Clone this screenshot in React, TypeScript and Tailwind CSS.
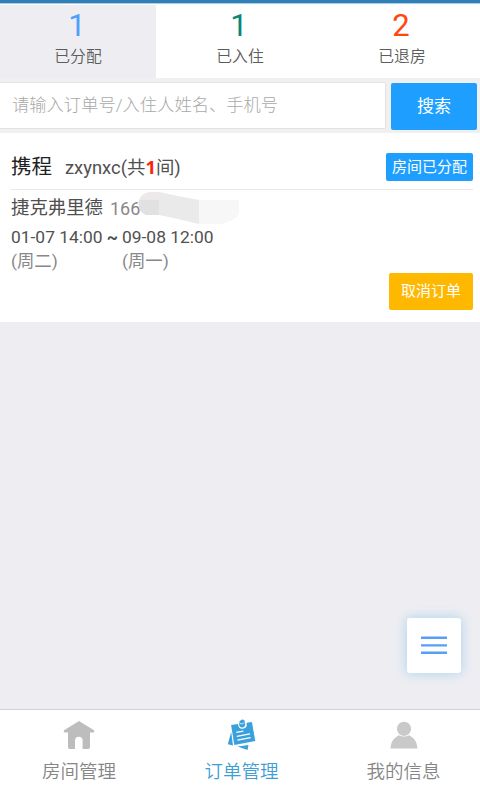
import React from 'react';

interface StatusTab {
  label: string;
  count: number;
  color: string;
  cell: string;
}

const STATUS_TABS: StatusTab[] = [
  { label: '已分配', count: 1, color: 'text-[#4da0fb]', cell: 'w-[156px] bg-[#eeeef2]' },
  { label: '已入住', count: 1, color: 'text-[#078776]', cell: 'w-[168px]' },
  { label: '已退房', count: 2, color: 'text-[#ff460f]', cell: 'w-[156px]' },
];

const HomeIcon = () => (
  <svg width="32" height="30" viewBox="0 0 32 30" fill="#bdbdbd">
    <path d="M16 1 31 10.3Q32 12.4 30.4 12.4H27V27.3Q27 29 25.3 29H19.6V20.8Q19.6 16.8 15.8 16.8T12 20.8V29H6.7Q5 29 5 27.3V12.4H1.6Q0 12.4 1 10.3Z" />
  </svg>
);

const OrderIcon = () => (
  <svg width="32" height="32" viewBox="0 0 32 32">
    <path d="M5.2 13 7 26.5 1.8 25.3Z" fill="#3aa1dc" />
    <path d="M11.5 27.6 22.5 26 21.6 31Z" fill="#3aa1dc" />
    <path d="M5.1 6.1 25.9 3.1 29.3 21.9 8.3 26Z" fill="#3aa1dc" />
    <path d="M10.3 13.3 17.3 12.1M10.8 17.3 24 14.8M11.4 21.2 24.6 18.7" stroke="#fff" strokeWidth="1.2" />
    <path d="M11.9 4.6Q12.3 10.3 17 9.8T20.6 3.6L16 1Z" fill="#fff" />
    <path d="M13.6 2.4Q16.2-.8 18.6 1.7L19.2 4.3Q19.6 8 16.6 8.4 13.3 8.6 13.1 5.2Z" fill="#3aa1dc" />
    <path d="M13.8 4.4Q16.5 5.6 18.7 3.7" stroke="#fff" strokeWidth=".7" fill="none" />
  </svg>
);

const UserIcon = () => (
  <svg width="28" height="28" viewBox="0 0 28 28" fill="#c9c9c9">
    <circle cx="14" cy="7.8" r="7.1" />
    <path d="M.6 27.5C.8 19.8 4.7 16.3 9.2 14.2Q14 17 18.8 14.2C23.3 16.3 27.2 19.8 27.4 27.5Z" />
  </svg>
);

const NAV_ITEMS = [
  { label: '房间管理', icon: <HomeIcon />, color: 'text-[#858585]', cell: 'w-[158px]' },
  { label: '订单管理', icon: <OrderIcon />, color: 'text-[#3f9ed3]', cell: 'w-[167px]' },
  { label: '我的信息', icon: <UserIcon />, color: 'text-[#858585]', cell: 'w-[157px]' },
];

export default function App() {
  return (
    <div className="relative flex h-[800px] w-[480px] flex-col overflow-hidden bg-[#eeeef2] font-['Roboto','Noto_Sans_CJK_SC',sans-serif] text-[#505050]">
      <div className="h-[4px] shrink-0 border-b border-[#a9cde5] bg-[#317fb7]" />

      {/* Order status tabs */}
      <div className="flex h-[74px] shrink-0 bg-white pt-px">
        {STATUS_TABS.map((tab) => (
          <div key={tab.label} className={`flex flex-col items-center ${tab.cell}`}>
            <span className={`mt-[4px] mr-[2px] text-[31px] leading-[34px] ${tab.color}`}>{tab.count}</span>
            <span className="mt-[2px] text-[15.8px] leading-[24px] font-[350] text-[#5c5c5c]">{tab.label}</span>
          </div>
        ))}
      </div>

      {/* Search */}
      <div className="flex h-[55px] shrink-0 items-start bg-[#f0f0f1] pt-[4px]">
        <input
          className="h-[47px] w-[386px] rounded-r-[2px] border border-l-0 border-[#e2e2e2] bg-white pb-[2px] pl-[12px] text-[17.3px] font-light outline-none placeholder:text-[#a9a9a9]"
          placeholder="请输入订单号/入住人姓名、手机号"
        />
        <button className="mt-px ml-[5px] h-[47px] w-[86px] rounded-[2px] bg-[#1e9fff] text-[17px] text-white">搜索</button>
      </div>

      {/* Order card */}
      <div className="h-[189px] shrink-0 bg-white pr-[7px] pl-[11px]">
        <div className="flex h-[57px] items-center border-b border-[#e8e8e8] pt-[12px]">
          <span className="text-[20.5px] text-[#222]">携程</span>
          <span className="ml-[13px] text-[18.4px]">
            zxynxc(共<b className="font-['Open_Sans'] text-[#ff1f0a]">1</b>间)
          </span>
          <span className="ml-auto h-[28px] w-[87px] rounded-[2px] bg-[#1e9fff] pt-px text-center text-[15px] leading-[27px] text-white">
            房间已分配
          </span>
        </div>
        <div className="flex h-[36px] items-center">
          <span className="text-[18.4px]">捷克弗里德</span>
          <span className="ml-[7px] text-[18px] text-[#888]">166</span>
          {/* masked part of the phone number */}
          <svg className="-ml-[2px]" width="102" height="34" viewBox="0 0 102 34">
            <path d="M1 9Q4 1 13 1H21V9Z" fill="#ece9e9" />
            <path d="M1 9H21V24H8Q-1 21 1 9Z" fill="#e1e1e1" />
            <path d="M21 1 35 4 61 9V33L40 28 21 24Z" fill="#eaeaea" />
            <path d="M61 9H101V22Q98 28 92 30L84 33H61Z" fill="#f7f7f7" />
          </svg>
        </div>
        <div className="flex text-[17.4px] leading-[24px]">
          <div className="w-[111px]">
            <p className="-mt-px whitespace-nowrap">01-07 14:00 <span className="font-bold">~</span></p>
            <p className="text-[#888]">(周二)</p>
          </div>
          <div>
            <p className="-mt-px">09-08 12:00</p>
            <p className="text-[#888]">(周一)</p>
          </div>
        </div>
        <div className="flex justify-end">
          <button className="h-[37px] w-[84px] rounded-[2px] bg-[#ffb800] text-[15px] text-white">取消订单</button>
        </div>
      </div>

      <button className="absolute top-[618px] left-[407px] flex h-[55px] w-[54px] items-center justify-center rounded-[3px] bg-white shadow-[0_0_12px_1px_#b3d5ed]">
        <svg width="26" height="19" viewBox="0 0 26 19" fill="#559ff5">
          <path d="M0 .6H26V3.1H0ZM0 8.2H26V10.6H0ZM0 15.6H26V18.1H0Z" />
        </svg>
      </button>

      {/* Bottom navigation */}
      <nav className="mt-auto flex h-[91px] shrink-0 border-t border-[#d3d3d5] bg-white">
        {NAV_ITEMS.map((item) => (
          <div key={item.label} className={`flex shrink-0 flex-col items-center ${item.cell}`}>
            <div className="mt-[9px] flex h-[32px] items-center">{item.icon}</div>
            <span className={`mt-[7px] text-[18.5px] leading-[28px] font-[350] ${item.color}`}>{item.label}</span>
          </div>
        ))}
      </nav>
    </div>
  );
}
